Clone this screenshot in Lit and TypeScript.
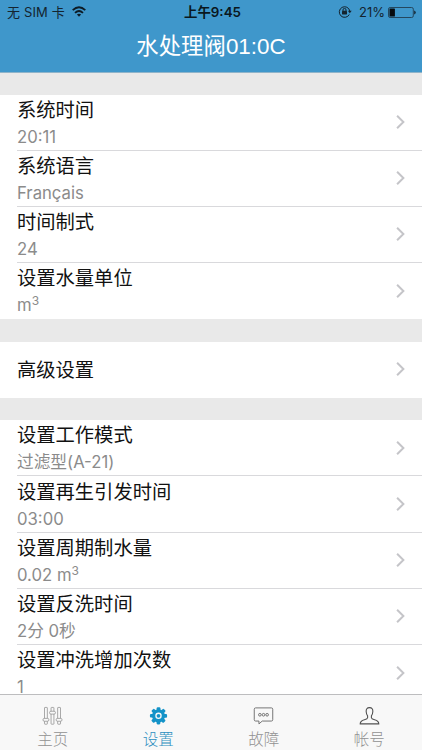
import { LitElement, html, css, svg, nothing } from "lit";
import { customElement, property } from "lit/decorators.js";

type Row = { title: string; value?: string; unit?: string };

const GROUPS: Row[][] = [
  [
    { title: "系统时间", value: "20:11" },
    { title: "系统语言", value: "Français" },
    { title: "时间制式", value: "24" },
    { title: "设置水量单位", value: "m", unit: "3" },
  ],
  [{ title: "高级设置" }],
  [
    { title: "设置工作模式", value: "过滤型(A-21)" },
    { title: "设置再生引发时间", value: "03:00" },
    { title: "设置周期制水量", value: "0.02 m", unit: "3" },
    { title: "设置反洗时间", value: "2分 0秒" },
    { title: "设置冲洗增加次数", value: "1" },
  ],
];

const TEETH = [0, 45, 90, 135, 180, 225, 270, 315];

const ICONS = {
  home: svg`
    <g fill="#f8f8f8" stroke="#969696" stroke-width="0.85">
      <rect x="2.1" y="1.5" width="3" height="17.6" rx="0.5"/>
      <rect x="9" y="1.5" width="3" height="17.6" rx="0.5"/>
      <rect x="15.9" y="1.5" width="3" height="17.6" rx="0.5"/>
      <rect x="0.5" y="13" width="6.2" height="3" rx="1.4"/>
      <rect x="7.4" y="5.5" width="6.2" height="3" rx="1.4"/>
      <rect x="14.3" y="13" width="6.2" height="3" rx="1.4"/>
    </g>`,
  settings: svg`
    <g fill="#1493c8">
      ${TEETH.map((a) => svg`<rect x="8.6" y="1.3" width="3.9" height="5" rx="1.1" transform="rotate(${a} 10.5 10.3)"/>`)}
      <circle cx="10.5" cy="10.3" r="6.9"/>
    </g>
    <circle cx="10.5" cy="10.3" r="2.7" fill="none" stroke="#f8f8f8" stroke-width="1.4"/>`,
  fault: svg`
    <g fill="none" stroke="#686868" stroke-width="0.95" stroke-linejoin="round">
      <path d="M2.2 2H18.8Q20.2 2 20.2 3.4V14.4Q20.2 15.8 18.8 15.8H9.2L5.7 18.8V15.8H2.2Q.8 15.8 .8 14.4V3.4Q.8 2 2.2 2Z"/>
      <circle cx="6.7" cy="9.2" r="1.4"/><circle cx="10.5" cy="9.2" r="1.4"/><circle cx="14.3" cy="9.2" r="1.4"/>
    </g>`,
  account: svg`
    <path fill="none" stroke="#505050" stroke-width="1.15" stroke-linejoin="round"
      d="M10.5 1.7C7.8 1.7 6.9 3.4 7 5.8C7.1 8 7.6 9.2 8.5 10.3V12.4C8.4 13.5 7.4 13.9 5.2 14.5C2.1 15.3.8 16 .7 18.8H20.3C20.2 16 18.9 15.3 15.8 14.5C13.6 13.9 12.6 13.5 12.5 12.4V10.3C13.4 9.2 13.9 8 14 5.8C14.1 3.4 13.2 1.7 10.5 1.7Z"/>`,
};

@customElement("setting-row")
class SettingRow extends LitElement {
  @property({ attribute: false }) row!: Row;

  static styles = css`
    :host { display: block; height: 56.2px; padding-left: 17px; background: #fff; box-sizing: border-box; }
    .cell { display: flex; align-items: center; height: 100%; box-sizing: border-box; border-bottom: 1px solid #d9d9dc; padding-right: 17px; }
    :host(.last) .cell { border-bottom-color: transparent; }
    .text { flex: 1; display: flex; flex-direction: column; gap: 6px; padding-bottom: 2px; white-space: nowrap; }
    .text.single { padding: 2px 0 0; }
    .title { font-size: 19.3px; line-height: 26px; color: #111; }
    .value { font-size: 16.7px; line-height: 17px; color: #8b8b8b; }
    .unit { font-size: 12px; position: relative; top: -6px; line-height: 0; }
    .chevron { width: 9px; height: 16px; display: block; }
  `;

  render() {
    const { title, value, unit } = this.row;
    return html`<div class="cell">
      <div class="text ${value ? "" : "single"}">
        <span class="title">${title}</span>
        ${value ? html`<span class="value">${value}${unit ? html`<span class="unit">${unit}</span>` : nothing}</span>` : nothing}
      </div>
      <svg class="chevron" viewBox="0 0 9 16"><path d="M1.1 1.7L7.4 8L1.1 14.3" fill="none" stroke="#c5c5c9" stroke-width="2"/></svg>
    </div>`;
  }
}

@customElement("tab-item")
class TabItem extends LitElement {
  @property() icon: keyof typeof ICONS = "home";
  @property() label = "";

  static styles = css`
    :host { display: flex; flex: 1; flex-direction: column; align-items: center; padding-top: 11px; color: #929292; }
    :host(.active) { color: #2d8fc0; }
    .icon { width: 21px; height: 21px; display: block; }
    .label { font-size: 15.5px; line-height: 20px; margin-top: 4px; font-weight: 300; }
  `;

  render() {
    return html`<svg class="icon" viewBox="0 0 21 21">${ICONS[this.icon]}</svg><span class="label">${this.label}</span>`;
  }
}

@customElement("app-root")
class AppRoot extends LitElement {
  static styles = css`
    :host { display: flex; flex-direction: column; height: 750px; overflow: hidden; background: #e9e9e9; font-family: Inter, "Noto Sans CJK SC", sans-serif; }
    .header { flex: none; height: 72.5px; box-sizing: border-box; background: #3f97cb; border-bottom: 1px solid #8fb4ca; }
    .status { display: grid; grid-template-columns: 1fr auto 1fr; align-items: center; height: 24px; padding: 0 6px 0 7px; font-size: 13px; line-height: 24px; color: #14242f; }
    .carrier { display: flex; align-items: center; gap: 7px; white-space: pre; letter-spacing: 0.15px; }
    .time { font-weight: 600; font-size: 13.4px; color: #0a1720; padding-left: 2px; }
    .power { display: flex; align-items: center; justify-content: flex-end; }
    .wifi { width: 14px; height: 11px; margin-bottom: 1px; }
    .lock { width: 14px; height: 13px; margin-right: 7px; margin-bottom: 1px; }
    .battery { width: 28px; height: 11px; margin-left: 3px; }
    .heading { font: 400 22.4px/46px "Liberation Sans", "Noto Sans CJK SC", sans-serif; color: #fff; text-align: center; margin: 0; }
    .list { flex: 1; min-height: 0; overflow: hidden; display: flex; flex-direction: column; gap: 22.4px; padding-top: 22px; }
    .group { flex: none; }
    .tabs { flex: none; display: flex; height: 56px; box-sizing: border-box; background: #f8f8f8; border-top: 1px solid #bdbdbf; }
  `;

  render() {
    return html`
      <header class="header">
        <div class="status">
          <div class="carrier"><span>无 SIM 卡</span>
            <svg class="wifi" viewBox="0 0 14 11"><g fill="none" stroke="#0d1b25" stroke-width="1.8"><path d="M.7 4.2Q7-1.7 13.3 4.2"/><path d="M3 6.8Q7 3.2 11 6.8"/></g><path d="M4.9 8.6Q7 6.8 9.1 8.6L7 10.8Z" fill="#0d1b25"/></svg>
          </div>
          <div class="time">上午9:45</div>
          <div class="power">
            <svg class="lock" viewBox="0 0 14 13"><path d="M11.3 9.5A5.3 5.3 0 1 1 11.8 6" fill="none" stroke="#14242f"/><path d="M9.9 5.8H13.7L11.8 8.3Z" fill="#14242f"/><rect x="4" y="5.8" width="5" height="3.7" rx=".4" fill="#14242f"/><path d="M5 6V4.9A1.5 1.5 0 0 1 8 4.9V6" fill="none" stroke="#14242f"/></svg>
            <span>21%</span>
            <svg class="battery" viewBox="0 0 28 11"><rect x=".5" y=".5" width="24.8" height="10" rx="1.6" fill="none" stroke="#24485f"/><rect x="1.5" y="1.5" width="5.4" height="8" rx=".6" fill="#060b0f"/><path d="M26.2 3.6Q27.7 4 27.7 5.5T26.2 7.4Z" fill="#14242f"/></svg>
          </div>
        </div>
        <h1 class="heading">水处理阀01:0C</h1>
      </header>
      <main class="list">
        ${GROUPS.map((rows) => html`<section class="group">
          ${rows.map((row, i) => html`<setting-row class=${i === rows.length - 1 ? "last" : ""} .row=${row}></setting-row>`)}
        </section>`)}
      </main>
      <nav class="tabs">
        <tab-item icon="home" label="主页"></tab-item>
        <tab-item class="active" icon="settings" label="设置"></tab-item>
        <tab-item icon="fault" label="故障"></tab-item>
        <tab-item icon="account" label="帐号"></tab-item>
      </nav>`;
  }
}
